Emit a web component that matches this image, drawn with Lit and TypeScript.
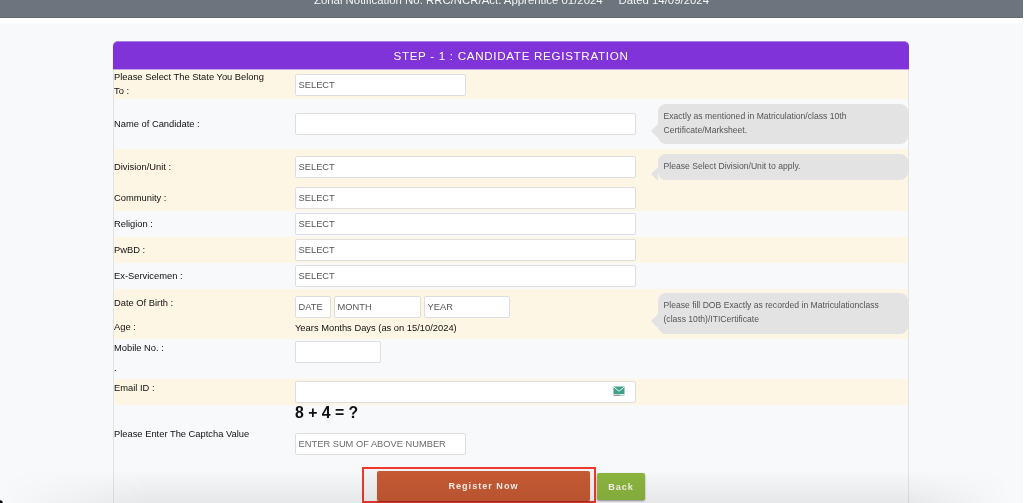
import { LitElement, html, css } from "lit";
import { customElement } from "lit/decorators.js";

@customElement("app-root")
export class AppRoot extends LitElement {
  static styles = css`
    :host { display: block; position: relative; height: 503px; overflow: hidden; background: #fff; font-family: "Liberation Sans", Arial, sans-serif; color: #111; font-size: 9.35px; filter: blur(0.3px); }
    .top { height: 18px; background: #6c757d; border-bottom: 1px solid #62696f; box-sizing: border-box; margin-right: 1px; display: flex; justify-content: center; align-items: flex-end; overflow: hidden; color: #f4f5f6; font-size: 11.4px; line-height: 14px; white-space: pre; padding-bottom: 10px; }
    .page { margin-top: 5px; background: #f8f9fa; height: 480px; padding: 18px 114px 0 113px; box-sizing: border-box; margin-right: 1px; }
    .card { border: 1px solid #e1e3e6; border-top: 0; border-radius: 5px 5px 0 0; height: 470px; }
    .head { height: 29px; margin: 0 -1px; box-sizing: border-box; background: #8033d8; border-top: 1px solid #a87ee0; border-bottom: 1px solid #c9a6ea; border-radius: 5px 5px 0 0; color: #fff; font-size: 11.6px; letter-spacing: 0.7px; display: flex; align-items: center; justify-content: center; }
    .row { display: grid; grid-template-columns: 181px 341px 1fr; align-items: start; position: relative; }
    .cream { background: #fef6e4; }
    .lab { line-height: 14.4px; padding-right: 20px; }
    .r1 { height: 29px; }
    .r1 .fld { padding-top: 4px; }
    .r2 { height: 50px; }
    .r2 .lab { padding-top: 18px; }
    .r2 .fld { padding-top: 14px; }
    .r3 { height: 34px; }
    .r3 .lab { padding-top: 11px; }
    .r3 .fld { padding-top: 7px; }
    .r4 { height: 28px; }
    .r4 .lab { padding-top: 8px; }
    .r4 .fld { padding-top: 4px; }
    .r5 { height: 26px; }
    .r5 .lab { padding-top: 6px; }
    .r5 .fld { padding-top: 2px; }
    .r6 { height: 50px; }
    .r6 .lab { padding-top: 7px; }
    .r6 .lab div + div { margin-top: 10px; }
    .r6 .fld { padding-top: 7px; }
    .r7 { height: 40px; }
    .r7 .lab { padding-top: 2px; }
    .r7 .fld { padding-top: 2px; }
    .dot { line-height: 10px; margin-top: 8px; }
    .r8 { height: 26px; }
    .r8 .lab { padding-top: 2px; }
    .r8 .fld { padding-top: 2px; }
    .r9 { height: 62px; }
    .r9 .lab { padding-top: 22px; }
    .sum { font-size: 15.8px; font-weight: 700; line-height: 16px; color: #111; margin: 0 0 12px; }
    .inp { display: block; box-sizing: border-box; width: 100%; height: 22px; background: #fff; border: 1px solid #dcdee1; border-radius: 2px; padding: 0 2.6px; margin: 0; font: 9.3px "Liberation Sans", Arial, sans-serif; color: #555; appearance: none; outline: 0; }
    .inp::placeholder { color: #6a6a6a; opacity: 1; }
    .w171 { width: 171px; }
    .w86 { width: 86px; }
    .w87 { width: 87px; }
    .w36 { width: 36px; }
    .dob { display: flex; gap: 3px; }
    .age { margin-top: 3px; line-height: 14px; }
    .mailbox { position: relative; }
    .mail { position: absolute; left: 318px; top: 7px; width: 12px; height: 11px; }
    .tip { position: relative; box-sizing: border-box; margin: 5px 0 0 22px; background: #e3e3e3; border-radius: 8px; color: #555; font-size: 8.6px; line-height: 14.4px; padding: 5px 20px 5px 5.5px; }
    .tip::before { content: ""; position: absolute; left: -7px; top: 50%; border: 7px solid transparent; border-left: 0; border-right-color: #e3e3e3; }
    .tip2 { height: 40px; }
    .tip3 { height: 26px; }
    .tip6 { height: 41px; margin-top: 4px; }
    .actions { display: flex; padding-left: 248px; align-items: flex-start; }
    .mark { display: flex; box-sizing: border-box; height: 36px; width: 234px; border: 2px solid #ee3a2c; padding: 2px 4px 0 13px; background: #f3f4f5; }
    button { border: 0; font: 700 9.1px "Liberation Sans", Arial, sans-serif; letter-spacing: 1px; color: #f8f3ee; border-radius: 2px; padding: 0; }
    .reg { width: 213px; height: 30px; background: #c65a34; box-shadow: 0 1px 1px rgba(0,0,0,.3); }
    .back { width: 48px; height: 27px; margin: 6px 0 0 1px; background: #8bb63e; box-shadow: 0 1px 2px rgba(0,0,0,.4); }
    .fade { position: absolute; left: 0; right: 0; bottom: 0; height: 34px; pointer-events: none; background: linear-gradient(to bottom, rgba(0,0,0,0), rgba(0,0,0,.07)); -webkit-mask-image: linear-gradient(to right, transparent 0, #000 150px, #000 900px, transparent 1010px); mask-image: linear-gradient(to right, transparent 0, #000 150px, #000 900px, transparent 1010px); }
    .corner { position: absolute; left: 0; bottom: 0; width: 4px; height: 5px; background: radial-gradient(circle at 0 100%, #000 2px, transparent 3.5px); }
  `;

  private sel(label: string, cls: string, alt = false) {
    return html`<div class="row ${cls} ${alt ? "cream" : ""}">
      <div class="lab">${label}</div>
      <div class="fld"><select class="inp"><option>SELECT</option></select></div>
    </div>`;
  }

  render() {
    return html`
      <div class="top">Zonal Notification No. RRC/NCR/Act. Apprentice 01/2024     Dated 14/09/2024</div>
      <div class="page">
        <div class="card">
          <div class="head">STEP - 1 : CANDIDATE REGISTRATION</div>
          <div class="row r1 cream">
            <div class="lab">Please Select The State You Belong To :</div>
            <div class="fld"><select class="inp w171"><option>SELECT</option></select></div>
          </div>
          <div class="row r2">
            <div class="lab">Name of Candidate :</div>
            <div class="fld"><input class="inp" /></div>
            <div class="tip tip2">Exactly as mentioned in Matriculation/class 10th Certificate/Marksheet.</div>
          </div>
          <div class="row r3 cream">
            <div class="lab">Division/Unit :</div>
            <div class="fld"><select class="inp"><option>SELECT</option></select></div>
            <div class="tip tip3">Please Select Division/Unit to apply.</div>
          </div>
          ${this.sel("Community :", "r4", true)}
          ${this.sel("Religion :", "r5")}
          ${this.sel("PwBD :", "r5", true)}
          ${this.sel("Ex-Servicemen :", "r5")}
          <div class="row r6 cream">
            <div class="lab"><div>Date Of Birth :</div><div>Age :</div></div>
            <div class="fld">
              <div class="dob">
                <select class="inp w36"><option>DATE</option></select>
                <select class="inp w87"><option>MONTH</option></select>
                <select class="inp w86"><option>YEAR</option></select>
              </div>
              <div class="age">Years Months Days (as on 15/10/2024)</div>
            </div>
            <div class="tip tip6">Please fill DOB Exactly as recorded in Matriculationclass (class 10th)/ITICertificate</div>
          </div>
          <div class="row r7">
            <div class="lab"><div>Mobile No. :</div><div class="dot">.</div></div>
            <div class="fld"><input class="inp w86" /></div>
          </div>
          <div class="row r8 cream">
            <div class="lab">Email ID :</div>
            <div class="fld mailbox">
              <input class="inp" />
              <svg class="mail" viewBox="0 0 12 11" aria-hidden="true">
                <rect x="0.5" y="0.5" width="11" height="7.5" rx="0.6" fill="#3f9f88"></rect>
                <path d="M1 1.2 6 5.2 11 1.2" fill="none" stroke="#e8f5ef" stroke-width="1"></path>
                <rect x="0.5" y="8.6" width="7" height="1.4" fill="#8c9aa0"></rect>
                <rect x="7.5" y="8.6" width="4" height="1.4" fill="#a8d8c4"></rect>
              </svg>
            </div>
          </div>
          <div class="row r9">
            <div class="lab">Please Enter The Captcha Value</div>
            <div class="fld">
              <div class="sum">8 + 4 = ?</div>
              <input class="inp w171" placeholder="ENTER SUM OF ABOVE NUMBER" />
            </div>
          </div>
          <div class="actions">
            <div class="mark"><button class="reg">Register Now</button></div>
            <button class="back">Back</button>
          </div>
        </div>
      </div>
      <div class="fade"></div>
      <div class="corner"></div>
    `;
  }
}
